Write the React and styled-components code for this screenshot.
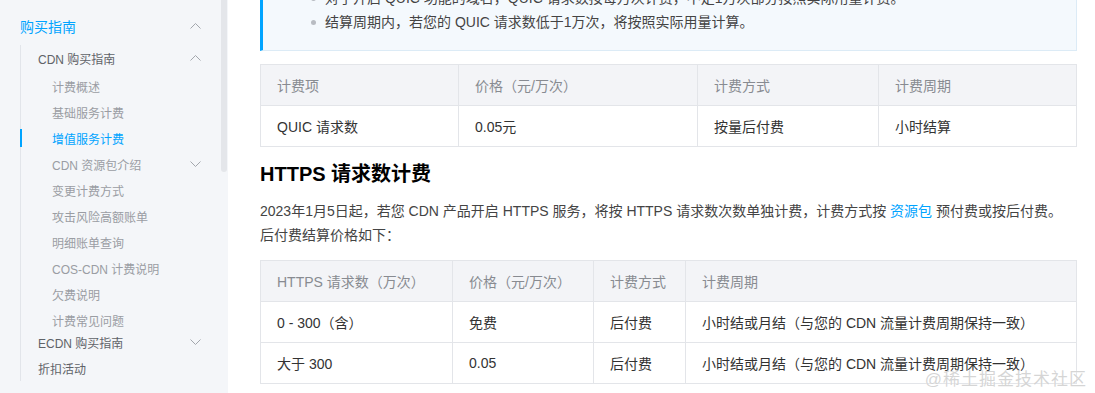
import styled, { createGlobalStyle } from "styled-components";

const GlobalStyle = createGlobalStyle`
  html, body {
    margin: 0;
    padding: 0;
    background: #fff;
  }
  body {
    font-family: "Liberation Sans", "Noto Sans CJK SC", sans-serif;
    width: 1095px;
    height: 393px;
    overflow: hidden;
  }
`;

const Chevron = ({ up }) => (
  <svg width="11" height="6" viewBox="0 0 11 6">
    <polyline
      points={up ? "0.5,5.5 5.5,0.5 10.5,5.5" : "0.5,0.5 5.5,5.5 10.5,0.5"}
      fill="none"
      stroke="#a3a7ad"
      strokeWidth="1"
    />
  </svg>
);

const subItems = [
  { label: "计费概述" },
  { label: "基础服务计费" },
  { label: "增值服务计费", active: true },
  { label: "CDN 资源包介绍", arrow: true },
  { label: "变更计费方式" },
  { label: "攻击风险高额账单" },
  { label: "明细账单查询" },
  { label: "COS-CDN 计费说明" },
  { label: "欠费说明" },
  { label: "计费常见问题" },
];

const quicCols = [198, 239, 181, 198];
const httpsCols = [192, 141, 92, 391];

function Sidebar() {
  return (
    <Side>
      <Thumb />
      <TopRow>
        <span>购买指南</span>
        <Chevron up />
      </TopRow>
      <Group>
        <SubRow>
          <span>CDN 购买指南</span>
          <Chevron up />
        </SubRow>
        <Leaves>
          {subItems.map((item) => (
            <Leaf key={item.label} $active={item.active}>
              <span>{item.label}</span>
              {item.arrow && <Chevron />}
            </Leaf>
          ))}
        </Leaves>
        <SubRow>
          <span>ECDN 购买指南</span>
          <Chevron />
        </SubRow>
        <SubRow>
          <span>折扣活动</span>
        </SubRow>
      </Group>
    </Side>
  );
}

function Table({ cols, head, rows }) {
  return (
    <Grid>
      <colgroup>
        {cols.map((w, i) => (
          <col key={i} style={{ width: w }} />
        ))}
      </colgroup>
      <thead>
        <tr>
          {head.map((h) => (
            <Th key={h}>{h}</Th>
          ))}
        </tr>
      </thead>
      <tbody>
        {rows.map((row, i) => (
          <tr key={i}>
            {row.map((c, j) => (
              <Td key={j}>{c}</Td>
            ))}
          </tr>
        ))}
      </tbody>
    </Grid>
  );
}

export default function App() {
  return (
    <>
      <GlobalStyle />
      <Page>
        <Sidebar />
        <Main>
          <Notice>
            <Bullet>对于开启 QUIC 功能的域名，QUIC 请求数按每万次计费，不足1万次部分按照实际用量计费。</Bullet>
            <Bullet>结算周期内，若您的 QUIC 请求数低于1万次，将按照实际用量计算。</Bullet>
          </Notice>
          <Table
            cols={quicCols}
            head={["计费项", "价格（元/万次）", "计费方式", "计费周期"]}
            rows={[["QUIC 请求数", "0.05元", "按量后付费", "小时结算"]]}
          />
          <Heading>HTTPS 请求数计费</Heading>
          <Para>
            2023年1月5日起，若您 CDN 产品开启 HTTPS 服务，将按 HTTPS 请求数次数单独计费，计费方式按 <Link>资源包</Link> 预付费或按后付费。
            <br />
            后付费结算价格如下：
          </Para>
          <Table
            cols={httpsCols}
            head={["HTTPS 请求数（万次）", "价格（元/万次）", "计费方式", "计费周期"]}
            rows={[
              ["0 - 300（含）", "免费", "后付费", "小时结或月结（与您的 CDN 流量计费周期保持一致）"],
              ["大于 300", "0.05", "后付费", "小时结或月结（与您的 CDN 流量计费周期保持一致）"],
            ]}
          />
        </Main>
        <Watermark>@稀土掘金技术社区</Watermark>
      </Page>
    </>
  );
}

const Page = styled.div`
  position: relative;
  display: flex;
  width: 1095px;
  height: 393px;
  overflow: hidden;
`;

const Side = styled.aside`
  position: relative;
  flex: 0 0 228px;
  height: 393px;
  box-sizing: border-box;
  padding: 13px 0 0 20px;
  background: #f4f6f9;
`;

const Thumb = styled.div`
  position: absolute;
  right: 1px;
  top: 0;
  width: 6px;
  height: 172px;
  border-radius: 0 0 3px 3px;
  background: #e4e6ea;
`;

const Row = styled.div`
  display: flex;
  align-items: center;
  justify-content: space-between;
  height: 26px;
  padding-right: 27px;
  white-space: nowrap;
`;

const TopRow = styled(Row)`
  font-size: 14px;
  color: #00a4ff;
`;

const Group = styled.div`
  margin-top: 6px;
  border-left: 1px solid #e2e5ea;
`;

const SubRow = styled(Row)`
  padding-left: 17px;
  font-size: 12px;
  color: #5f6368;
`;

const Leaves = styled.div`
  margin: 2px 0 -4px;
`;

const Leaf = styled(Row)`
  position: relative;
  padding-left: 31px;
  font-size: 12px;
  color: ${(p) => (p.$active ? "#00a4ff" : "#9a9da3")};

  &::before {
    content: "";
    display: ${(p) => (p.$active ? "block" : "none")};
    position: absolute;
    left: -1px;
    top: 4px;
    width: 2px;
    height: 18px;
    background: #00a4ff;
  }
`;

const Main = styled.main`
  flex: 1;
  box-sizing: border-box;
  padding: 0 19px 0 32px;
  margin-top: -31px;
  color: #333;
  font-size: 14px;
`;

const Notice = styled.ul`
  margin: 0;
  list-style: none;
  padding: 16px 16px 16px 62px;
  background: #f4f9fd;
  border: 1px solid #dcebf6;
  border-left: 3px solid #00a4ff;
`;

const Bullet = styled.li`
  position: relative;
  line-height: 24px;
  color: #444;
  white-space: nowrap;

  &::before {
    content: "";
    position: absolute;
    left: -14px;
    top: 10px;
    width: 5px;
    height: 5px;
    border-radius: 50%;
    background: #b8bcc2;
  }
`;

const Grid = styled.table`
  width: 100%;
  margin-top: 13px;
  table-layout: fixed;
  border-collapse: collapse;
  font-size: 14px;
`;

const Th = styled.th`
  height: 40px;
  padding: 0 16px;
  text-align: left;
  font-weight: normal;
  color: #888b91;
  background: #f3f4f7;
  border: 1px solid #e3e5e9;
  white-space: nowrap;
`;

const Td = styled.td`
  height: 40px;
  padding: 0 16px;
  color: #333;
  border: 1px solid #e3e5e9;
  white-space: nowrap;
`;

const Heading = styled.h2`
  margin: 13px 0 0;
  font-size: 20px;
  line-height: 28px;
  font-weight: bold;
  color: #000;
`;

const Para = styled.p`
  margin: 11px 0 0;
  line-height: 24px;
  color: #444;
  white-space: nowrap;
`;

const Link = styled.a`
  color: #00a4ff;
  text-decoration: none;
`;

const Watermark = styled.div`
  position: absolute;
  right: 8px;
  bottom: 3px;
  font-size: 17px;
  letter-spacing: 1px;
  color: rgba(200, 200, 200, 0.75);
  text-shadow: 0 0 1px rgba(255, 255, 255, 0.9);
  pointer-events: none;
`;
